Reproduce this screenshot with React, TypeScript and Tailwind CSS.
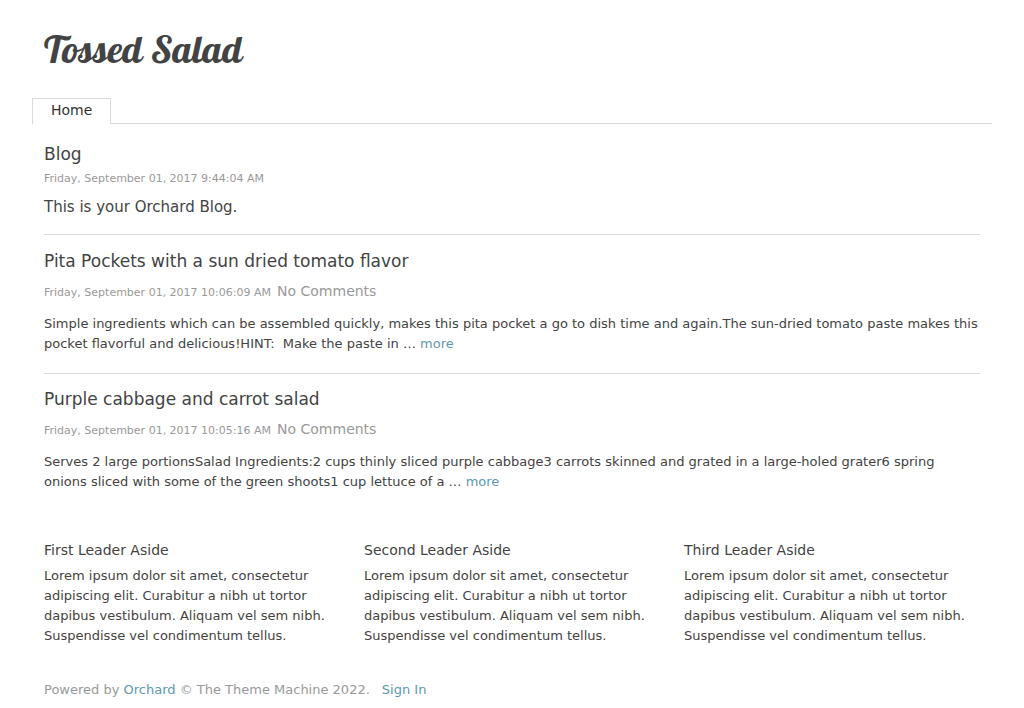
import React from "react";

const posts = [
  {
    title: "Pita Pockets with a sun dried tomato flavor",
    date: "Friday, September 01, 2017 10:06:09 AM",
    text: "Simple ingredients which can be assembled quickly, makes this pita pocket a go to dish time and again.The sun-dried tomato paste makes this pocket flavorful and delicious!HINT: \u00a0Make the paste in … ",
  },
  {
    title: "Purple cabbage and carrot salad",
    date: "Friday, September 01, 2017 10:05:16 AM",
    text: "Serves 2 large portionsSalad Ingredients:2 cups thinly sliced purple cabbage3 carrots skinned and grated in a large-holed grater6 spring onions sliced with some of the green shoots1 cup lettuce of a … ",
  },
];

const asides = ["First Leader Aside", "Second Leader Aside", "Third Leader Aside"];

export default function App() {
  return (
    <div className="mx-auto max-w-[960px] bg-white font-['DejaVu_Sans',sans-serif] text-[13px] leading-5 text-[#434343]">
      <header className="px-3 pt-6 pb-6">
        <h1 className="font-['Lobster','Liberation_Serif',serif] text-[38px] leading-[50px] [font-variant-ligatures:none]">
          <a href="#">Tossed Salad</a>
        </h1>
      </header>
      <nav className="flex border-b border-[#dbdbdb]">
        <a href="#" className="-mb-px border border-b-0 border-[#dbdbdb] bg-white px-[18px] pb-[3px] text-sm leading-[22px] text-[#333]">
          Home
        </a>
      </nav>
      <main className="px-3 pt-[18px]">
        <div className="border-b border-[#dbdbdb] pb-[17px]">
          <h2 className="text-[17px] leading-6">Blog</h2>
          <p className="mt-[3px] text-[11px] leading-5 text-[#999]">Friday, September 01, 2017 9:44:04 AM</p>
          <p className="mt-2 text-[15px] leading-5">This is your Orchard Blog.</p>
        </div>
        <ul className="pt-px">
          {posts.map((post) => (
            <li key={post.title} className="border-t border-[#dbdbdb] pt-[13px] pb-[19px] first:border-t-0">
              <article>
                <h3 className="text-[17px] leading-6">{post.title}</h3>
                <p className="mt-2 text-sm leading-5 text-[#999]">
                  <span className="mr-1.5 text-[11px]">{post.date}</span>No Comments
                </p>
                <p className="mt-[11px]">
                  {post.text}
                  <a href="#" className="text-[#5f97af]">more</a>
                </p>
              </article>
            </li>
          ))}
        </ul>
      </main>
      <section className="mt-[29px] grid grid-cols-3">
        {asides.map((title) => (
          <article key={title} className="px-3">
            <h4 className="text-sm leading-5">{title}</h4>
            <p className="mt-[6px]">
              Lorem ipsum dolor sit amet, consectetur adipiscing elit. Curabitur a nibh ut tortor dapibus vestibulum. Aliquam vel sem nibh. Suspendisse vel condimentum tellus.
            </p>
          </article>
        ))}
      </section>
      <footer className="mt-[34px] px-3 text-[#999]">
        Powered by <a href="#" className="text-[#5f97af]">Orchard</a> © The Theme Machine 2022.
        <a href="#" className="ml-3 text-[#5f97af]">Sign In</a>
      </footer>
    </div>
  );
}
